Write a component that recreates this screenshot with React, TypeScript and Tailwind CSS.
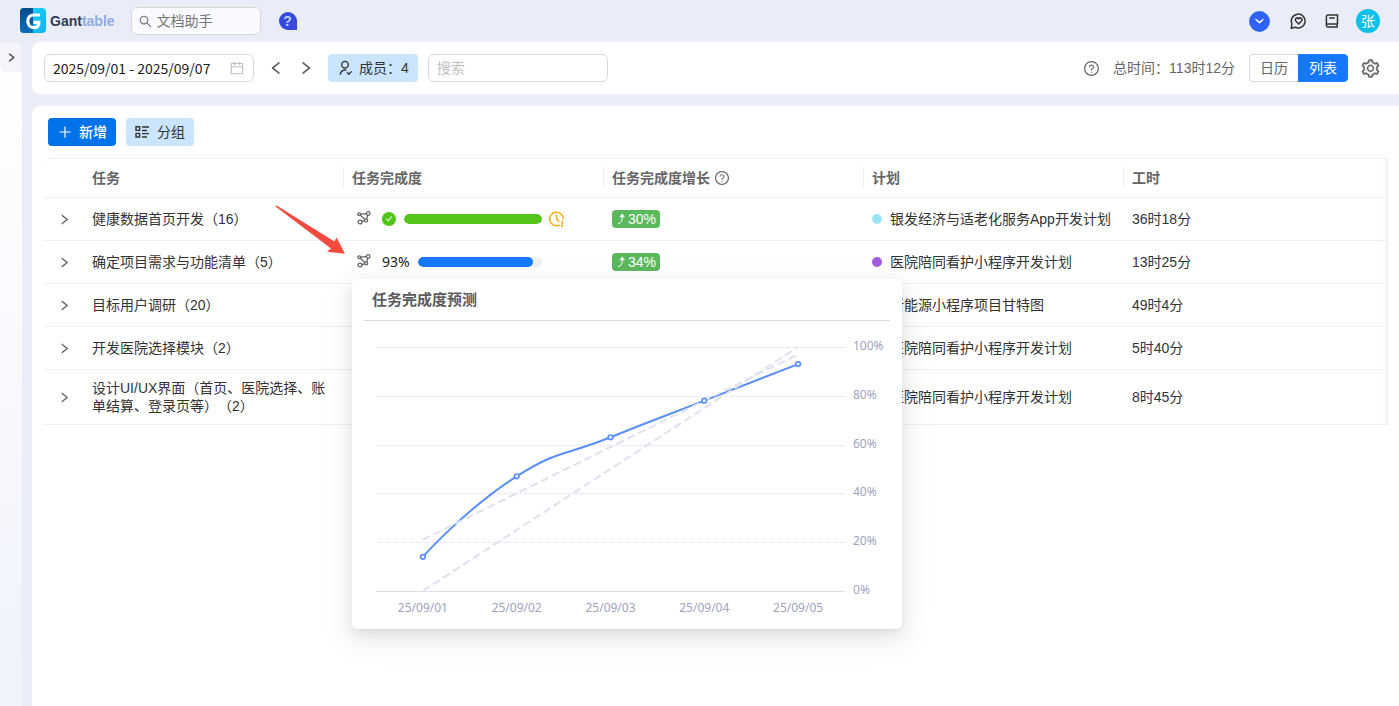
import React, { useState } from 'react';
import {
  AiFillCheckCircle,
  AiOutlineCalendar,
  AiOutlineLeft,
  AiOutlinePlus,
  AiOutlineQuestionCircle,
  AiOutlineRight,
  AiOutlineSearch,
  AiOutlineSetting,
} from 'react-icons/ai';
import { RiUserFollowLine } from 'react-icons/ri';

interface Task {
  name: string;
  percent?: number;
  growth?: number;
  overdue?: boolean;
  plan: string;
  color: string;
  hours: string;
}

const tasks: Task[] = [
  { name: '健康数据首页开发（16）', percent: 100, growth: 30, overdue: true, plan: '银发经济与适老化服务App开发计划', color: 'bg-[#9fe3f7]', hours: '36时18分' },
  { name: '确定项目需求与功能清单（5）', percent: 93, growth: 34, plan: '医院陪同看护小程序开发计划', color: 'bg-[#a25ddc]', hours: '13时25分' },
  { name: '目标用户调研（20）', plan: '新能源小程序项目甘特图', color: 'bg-[#fdab3d]', hours: '49时4分' },
  { name: '开发医院选择模块（2）', plan: '医院陪同看护小程序开发计划', color: 'bg-[#a25ddc]', hours: '5时40分' },
  { name: '设计UI/UX界面（首页、医院选择、账单结算、登录页等）（2）', plan: '医院陪同看护小程序开发计划', color: 'bg-[#a25ddc]', hours: '8时45分' },
];

const history = [
  { date: '25/09/01', value: 14 },
  { date: '25/09/02', value: 47 },
  { date: '25/09/03', value: 63 },
  { date: '25/09/04', value: 78 },
  { date: '25/09/05', value: 93 },
];

// グラフの座標変換
const LEFT = 12;
const STEP = 93.8;
const px = (i: number) => LEFT + STEP / 2 + i * STEP;
const py = (v: number) => 270 - v * 2.44;

// 前後の点の向きから制御点を作る
function smoothPath(pts: number[][]) {
  const handles = pts.map((p, i) => {
    const prev = pts[i - 1];
    const next = pts[i + 1];
    if (!prev || !next) return [p, p];
    const a = Math.hypot(p[0] - prev[0], p[1] - prev[1]);
    const b = Math.hypot(next[0] - p[0], next[1] - p[1]);
    const r = b / (a + b);
    const vx = (next[0] - prev[0]) / 2;
    const vy = (next[1] - prev[1]) / 2;
    return [
      [p[0] - vx * (1 - r), p[1] - vy * (1 - r)],
      [p[0] + vx * r, p[1] + vy * r],
    ];
  });
  return pts.map((p, i) => (i === 0 ? `M${p}` : `C${handles[i - 1][1]} ${handles[i][0]} ${p}`)).join(' ');
}

function Logo() {
  return (
    <svg width="26" height="26" viewBox="0 0 26 26" aria-hidden="true">
      <defs>
        <linearGradient id="logo-right" x1="0" y1="0" x2="1" y2="1">
          <stop offset="0" stopColor="#19d3fb" />
          <stop offset="1" stopColor="#12b4f2" />
        </linearGradient>
        <linearGradient id="logo-left" x1="0" y1="0" x2="0" y2="1">
          <stop offset="0" stopColor="#064a88" />
          <stop offset="1" stopColor="#0a6db8" />
        </linearGradient>
      </defs>
      <rect width="26" height="25" rx="4" fill="url(#logo-right)" />
      <path d="M4 0H13V25H4A4 4 0 0 1 0 21V4A4 4 0 0 1 4 0Z" fill="url(#logo-left)" />
      <path d="M20 7H13.8C9.8 7 7.8 9.8 7.8 13.2C7.8 16.8 10.2 19.6 13.6 19.6C17 19.6 18.9 18 18.9 14.4H13.4" fill="none" stroke="#fff" strokeWidth="3.2" />
    </svg>
  );
}

function ShareIcon() {
  return (
    <svg width="14" height="16" viewBox="0 0 14 16" fill="none" stroke="#666" strokeWidth="1.3" aria-hidden="true">
      <circle cx="2.2" cy="3.3" r="1.4" />
      <circle cx="11.2" cy="2.5" r="1.8" />
      <circle cx="3" cy="11" r="1.9" />
      <circle cx="9.2" cy="9.4" r="1.5" />
      <path d="M3.6 3.2L9.4 2.7M3.3 4.3L8.1 8.4M4.9 10.5L7.7 9.8M9.7 8L10.6 4.2" />
    </svg>
  );
}

function LateIcon() {
  return (
    <svg width="16" height="16" viewBox="0 0 16 16" fill="none" stroke="#faad14" strokeWidth="1.5" strokeLinecap="round" aria-hidden="true">
      <path d="M10.2 14.2A6.8 6.8 0 1 1 14.3 7.8" />
      <path d="M7.6 4.2V8.2L9.8 10.2M13.2 10V13" />
      <circle cx="13.2" cy="15" r="0.4" />
    </svg>
  );
}

function ForecastChart() {
  return (
    <svg className="block w-full" viewBox="0 0 526 308" aria-label="任务完成度预测">
      {[20, 40, 60, 80, 100].map((v) => (
        <line key={v} x1="12" x2="481" y1={Math.round(py(v)) + 0.5} y2={Math.round(py(v)) + 0.5} stroke="#d9deec" strokeDasharray="1 1" />
      ))}
      <line x1="12" x2="481" y1="270.5" y2="270.5" stroke="#dcdfeb" />
      {[0, 20, 40, 60, 80, 100].map((v) => (
        <text key={v} x="489" y={py(v) + 3} fontSize="12" fill="#a0a3bd">
          {v}%
        </text>
      ))}
      {history.map((h, i) => (
        <text key={h.date} x={px(i)} y="291" fontSize="12" fill="#a0a3bd" textAnchor="middle">
          {h.date}
        </text>
      ))}
      <path d={smoothPath(history.map((h, i) => [px(i), py(h.value)]))} fill="none" stroke="#5b8ff9" strokeWidth="2" />
      <g fill="none" stroke="#dfe1ef" strokeWidth="2" strokeDasharray="8 4">
        <path d={`M${px(0)} ${py(21)}L${px(4)} ${py(97)}`} />
        <path d={`M${px(0)} ${py(0)}L${px(4)} ${py(100)}`} />
      </g>
      {history.map((h, i) => (
        <circle key={h.date} cx={px(i)} cy={py(h.value)} r="2.3" fill="#fff" stroke="#5b8ff9" strokeWidth="1.7" />
      ))}
    </svg>
  );
}

function Progress({ task }: { task: Task }) {
  const done = task.percent === 100;
  return (
    <div className="flex items-center pl-[5px]">
      <button aria-label="预测" className={done ? 'mr-2.5' : 'mr-[11px]'}>
        <ShareIcon />
      </button>
      <div className={`flex items-center ${done ? 'w-[161px] gap-[7px]' : 'w-40 gap-2'}`}>
        {done ? (
          <AiFillCheckCircle size={16} className="shrink-0 text-[#52c41a]" />
        ) : (
          <span className="font-['Noto_Sans'] text-[#222]">{task.percent}%</span>
        )}
        <div className="h-2.5 flex-1 overflow-hidden rounded-full bg-[#f0f0f0]">
          <div className={`h-full rounded-full ${done ? 'bg-[#52c41a]' : 'bg-[#1677ff]'}`} style={{ width: `${task.percent}%` }} />
        </div>
      </div>
      {task.overdue && (
        <span className="ml-[7px]">
          <LateIcon />
        </span>
      )}
    </div>
  );
}

function Header() {
  return (
    <header className="flex h-[42px] shrink-0 items-center pl-5 pr-[19px]">
      <a href="#" className="flex items-center gap-1 text-sm font-bold text-[#303a57]">
        <Logo />
        <span>
          Gant<span className="text-[#8fabdf]">table</span>
        </span>
      </a>
      <label className="ml-4 flex h-7 w-[130px] items-center gap-1 rounded-md border border-[#d9d9d9] bg-[#f9fafd] pl-1.5">
        <AiOutlineSearch size={15} className="shrink-0 text-[#777]" />
        <input aria-label="文档助手" placeholder="文档助手" className="w-full min-w-0 bg-transparent text-sm outline-none placeholder:text-[#757575]" />
      </label>
      <button aria-label="帮助" className="ml-[18px] flex size-[18px] items-center justify-center rounded-full rounded-br-none bg-[#3748dd] text-sm font-bold text-[#b9d7ff]">
        ?
      </button>
      <div className="ml-auto flex items-center">
        <button aria-label="助手" className="mr-5">
          <svg width="21" height="21" viewBox="0 0 21 21">
            <circle cx="10.5" cy="10.5" r="10.4" fill="#2f63f5" />
            <path d="M5.5 7.3Q9 8.6 10.5 10.4Q12 8.6 15.5 7.3Q13 11.2 10.5 12.6Q8 11.2 5.5 7.3Z" fill="#fff" />
          </svg>
        </button>
        <button aria-label="反馈" className="mr-[18px]">
          <svg width="17" height="17" viewBox="0 0 17 17" fill="none" stroke="#333" strokeWidth="1.5">
            <path d="M1.2 15.2L1.9 10.8A6.9 6.9 0 1 1 5.2 14.2Z" strokeLinejoin="round" />
            <path d="M8.7 10.9L5.8 7.9A1.8 1.8 0 0 1 8.7 5.7A1.8 1.8 0 0 1 11.6 7.9Z" strokeLinejoin="round" />
          </svg>
        </button>
        <button aria-label="文档" className="mr-[17px]">
          <svg width="14" height="14" viewBox="0 0 14 14" fill="none" stroke="#333" strokeWidth="1.5">
            <path d="M12.5 10V1H3A1.6 1.6 0 0 0 1.4 2.6V11.6A1.5 1.5 0 0 0 2.9 13.1H12.9M12.5 10H2.9A1.5 1.5 0 0 0 1.4 11.6M12.2 10V13M4.2 4H9.8" />
          </svg>
        </button>
        <button className="size-6 rounded-full bg-[#0bc0ea] text-sm leading-6 text-white">张</button>
      </div>
    </header>
  );
}

function Toolbar() {
  const [view, setView] = useState('列表');
  return (
    <section className="flex h-[52px] items-center rounded-l-lg bg-white pl-3 pr-[18px]">
      <label className="flex h-7 w-[210px] items-center rounded-md border border-[#d9d9d9] px-2">
        <input aria-label="日期范围" defaultValue="2025/09/01 - 2025/09/07" className="w-full min-w-0 font-['Noto_Sans_CJK_SC',sans-serif] text-sm text-[#222] outline-none" />
        <AiOutlineCalendar size={16} className="shrink-0 text-[#bfbfbf]" />
      </label>
      <button aria-label="上一周" className="ml-[14px] text-[#555]">
        <AiOutlineLeft size={16} strokeWidth={24} />
      </button>
      <button aria-label="下一周" className="ml-[14px] text-[#555]">
        <AiOutlineRight size={16} strokeWidth={24} />
      </button>
      <button className="ml-[14px] flex h-7 items-center gap-1.5 rounded bg-[#cce5ff] px-[9px] text-sm text-[#333]">
        <RiUserFollowLine size={16} />
        成员：4
      </button>
      <input aria-label="搜索" placeholder="搜索" className="ml-2.5 h-7 w-[180px] rounded-md border border-[#d9d9d9] px-2 text-sm outline-none placeholder:text-[#bfbfbf]" />
      <div className="ml-auto flex items-center text-sm text-[#666]">
        <AiOutlineQuestionCircle size={17} />
        <span className="ml-[13px]">总时间：113时12分</span>
        <div className="ml-[14px] flex h-7">
          {['日历', '列表'].map((v) => (
            <button
              key={v}
              onClick={() => setView(v)}
              className={`border px-2.5 first:rounded-l last:rounded-r ${view === v ? 'border-[#1677ff] bg-[#1677ff] text-white' : 'border-[#d9d9d9] border-r-0'}`}
            >
              {v}
            </button>
          ))}
        </div>
        <button aria-label="设置" className="ml-3">
          <AiOutlineSetting size={21} strokeWidth={16} />
        </button>
      </div>
    </section>
  );
}

function HeadCell({ children, last }: { children: React.ReactNode; last?: boolean }) {
  return (
    <th className="border-y border-[#f0f0f0] p-0 text-left font-semibold text-[#666]">
      <div className={`flex h-[22px] items-center gap-1 px-2 ${last ? '' : 'border-r border-[#f0f0f0]'}`}>{children}</div>
    </th>
  );
}

function TaskTable() {
  return (
    <table className="w-full table-fixed border-separate border-spacing-0 text-sm leading-[18px] text-[#333]">
      <colgroup>
        <col className="w-10" />
        <col className="w-[260px]" />
        <col className="w-[260px]" />
        <col className="w-[260px]" />
        <col className="w-[260px]" />
        <col />
      </colgroup>
      <thead>
        <tr className="h-10">
          <th aria-label="展开" className="rounded-tl-lg border-y border-[#f0f0f0]" />
          <HeadCell>任务</HeadCell>
          <HeadCell>任务完成度</HeadCell>
          <HeadCell>
            任务完成度增长
            <AiOutlineQuestionCircle size={16} />
          </HeadCell>
          <HeadCell>计划</HeadCell>
          <HeadCell last>工时</HeadCell>
        </tr>
      </thead>
      <tbody>
        {tasks.map((task, i) => (
          <tr key={task.name} className="h-[43px]">
            <td className="border-b border-[#f0f0f0] p-0">
              <button aria-label="展开" className="mx-auto block text-[#555]">
                <AiOutlineRight size={13} strokeWidth={24} />
              </button>
            </td>
            <td className="border-b border-[#f0f0f0] px-2 py-[9px] [text-spacing-trim:space-all]">{task.name}</td>
            <td className="relative border-b border-[#f0f0f0] px-2 py-0">
              {task.percent && <Progress task={task} />}
              {/* 予測ポップオーバー */}
              {i === 1 && (
                <div
                  role="dialog"
                  className="absolute left-2 top-[38px] z-10 w-[550px] rounded-md bg-white px-3 shadow-[0_6px_16px_0_rgba(0,0,0,0.08),0_3px_6px_-4px_rgba(0,0,0,0.12),0_9px_28px_8px_rgba(0,0,0,0.05)]"
                >
                  <h3 className="flex h-[42px] items-center border-b border-[#d9d9d9] px-2 text-[15px] font-semibold text-[#5c5c5c]">任务完成度预测</h3>
                  <div className="font-['Noto_Sans']">
                    <ForecastChart />
                  </div>
                </div>
              )}
            </td>
            <td className="border-b border-[#f0f0f0] px-2 py-0">
              {task.growth && (
                <span className="flex h-[18px] w-fit items-center gap-0.5 rounded bg-[#5cb85c] px-1 text-white">
                  <svg width="10" height="12" viewBox="0 0 10 12" fill="none" stroke="#fff" aria-hidden="true">
                    <path d="M2 10.5C5 10.3 6.2 8.5 6.2 5V2" />
                    <path d="M3.4 4.2L6.2 0.6L9 4.2Z" fill="#fff" stroke="none" />
                  </svg>
                  {task.growth}%
                </span>
              )}
            </td>
            <td className="border-b border-[#f0f0f0] px-2 py-0">
              <div className="flex items-center gap-2">
                <span className={`size-2.5 shrink-0 rounded-full ${task.color}`} />
                <span className="truncate">{task.plan}</span>
              </div>
            </td>
            <td className="border-b border-[#f0f0f0] px-2 py-0">{task.hours}</td>
          </tr>
        ))}
      </tbody>
    </table>
  );
}

export default function App() {
  return (
    <div className="relative flex min-h-screen flex-col bg-[#eaedf7] font-['Liberation_Sans','Noto_Sans_CJK_SC',sans-serif]">
      <Header />
      <div className="flex flex-1 gap-2.5">
        <aside className="w-[22px] shrink-0 rounded-tr-lg bg-linear-to-b from-white to-[#f0f3fb]">
          <button aria-label="展开侧栏" className="flex h-[30px] w-full items-center justify-center rounded-bl-lg rounded-tr-lg bg-[#f4f5fb] text-[#222]">
            <AiOutlineRight size={11} strokeWidth={30} />
          </button>
        </aside>
        <main className="flex min-w-0 flex-1 flex-col gap-3">
          <Toolbar />
          <section className="flex-1 rounded-tl-lg bg-white pl-3 pr-[11px] pt-3">
            <div className="mb-3 flex gap-2.5 pl-1 text-sm">
              <button className="flex h-7 items-center gap-1.5 rounded bg-[#0073ea] px-[9px] font-medium text-white">
                <AiOutlinePlus size={16} />
                新增
              </button>
              <button className="flex h-7 items-center gap-1.5 rounded bg-[#cce5ff] px-[9px] text-[#333]">
                <svg width="16" height="12" viewBox="0 0 16 12" fill="none" stroke="#333" strokeWidth="1.4" aria-hidden="true">
                  <path d="M1 .8H4.6V4.4H1ZM1 7.4H4.6V11H1ZM7 1H14M7 4.5H12M7 7.6H14M7 11H12" />
                </svg>
                分组
              </button>
            </div>
            <div className="border-r border-[#f0f0f0] shadow-[inset_-6px_0_6px_-6px_rgba(0,0,0,0.08)]">
              <TaskTable />
            </div>
          </section>
        </main>
      </div>
      {/* 行を指す赤い矢印 */}
      <svg className="pointer-events-none absolute left-[275px] top-[205px] z-20" width="71" height="50" viewBox="0 0 71 50" aria-hidden="true">
        <path d="M.6 1.6Q.6.2 2 .8L59.5 36.5L61.5 32.3L70 48.7L52 46.7L56 43.5Z" fill="#f24a3d" />
      </svg>
    </div>
  );
}
